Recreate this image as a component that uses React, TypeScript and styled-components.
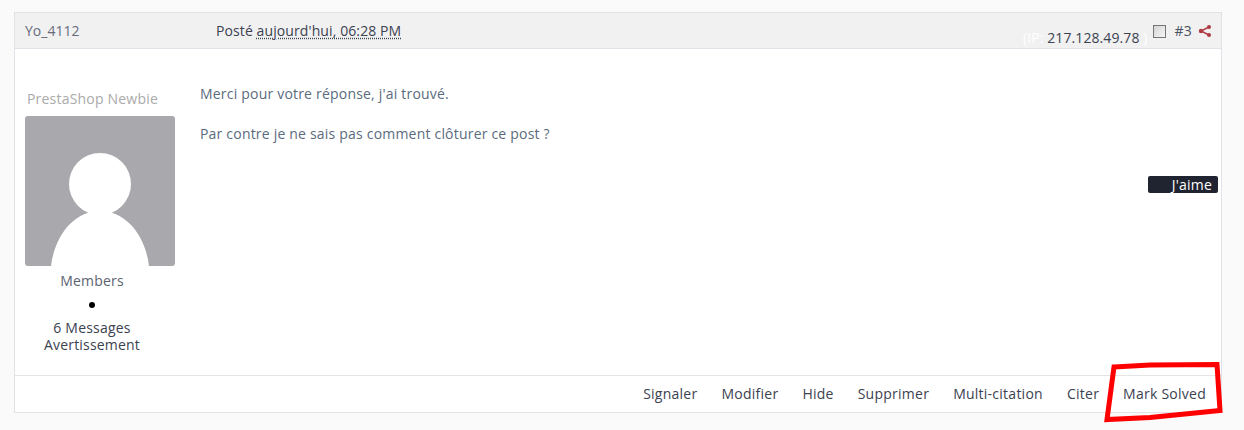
import styled, { createGlobalStyle } from 'styled-components'

const Global = createGlobalStyle`
  html, body {
    margin: 0;
    padding: 0;
    background: #fafafa;
    font-family: "Open Sans", "Liberation Sans", sans-serif;
    font-size: 14px;
    letter-spacing: 0.2px;
    color: #3b4250;
  }
`

const Page = styled.div`
  position: relative;
  width: 1244px;
  height: 430px;
  padding: 12px 22px 0 14px;
  box-sizing: border-box;
  overflow: hidden;
`

const Card = styled.article`
  height: 401px;
  box-sizing: border-box;
  background: #fff;
  border: 1px solid #dfe3e8;
  display: flex;
  flex-direction: column;
`

const Header = styled.header`
  height: 36px;
  flex: none;
  box-sizing: border-box;
  background: #f1f1f2;
  border-bottom: 1px solid #dfe3e8;
  display: flex;
  align-items: center;
  padding: 0 9px 0 10px;
`

const Author = styled.span`
  width: 191px;
  letter-spacing: 0;
  color: #666d7a;
`

const Posted = styled.span`
  flex: 1;
  letter-spacing: 0.1px;
  color: #3b4250;
`

const PostDate = styled.abbr`
  text-decoration: underline dotted;
  text-underline-offset: 2px;
`

const Ip = styled.span`
  color: #fff;
  letter-spacing: 0.1px;
  margin: 13px 5px 0 0;
  line-height: 19px;
`

const IpValue = styled.span`
  color: #3b4250;
`

const Check = styled.span`
  width: 11px;
  height: 11px;
  border: 1px solid #767676;
  background: linear-gradient(135deg, #d4d4d4, #f6f6f6);
  margin: 1px 9px 0 0;
`

const PostNumber = styled.span`
  color: #4a5260;
  margin: -1px 6px 0 0;
`

const ShareIcon = styled.svg`
  width: 14px;
  height: 14px;
  color: #b03a42;
`

const Body = styled.div`
  flex: 1;
  position: relative;
  display: flex;
  min-height: 0;
`

const Side = styled.aside`
  width: 155px;
  margin-left: 10px;
  flex: none;
  padding-top: 40px;
  display: flex;
  flex-direction: column;
  align-items: center;
  box-sizing: border-box;
`

const Rank = styled.div`
  align-self: flex-start;
  margin-left: 2px;
  line-height: 20px;
  color: #aaaaaa;
`

const Avatar = styled.svg`
  display: block;
  width: 150px;
  height: 150px;
  margin-top: 7px;
  align-self: flex-start;
  border-radius: 3px;
`

const Group = styled.div`
  margin-top: 5px;
  line-height: 20px;
  color: #5a6270;
  width: 150px;
  margin-right: 21px;
  text-align: center;
`

const Bullet = styled.span`
  display: block;
  width: 6px;
  height: 6px;
  border-radius: 50%;
  background: #000;
  margin: 11px 0 0 -21px;
`

const Stats = styled.div`
  margin: 11px 21px 0 0;
  line-height: 17px;
  text-align: center;
  color: #3b4250;
`

const Content = styled.div`
  flex: 1;
  padding: 35px 0 0 20px;
  color: #5a6b7d;
`

const Paragraph = styled.p`
  margin: 0 0 20px;
  line-height: 20px;
`

const LikeBadge = styled.span`
  position: absolute;
  right: 3px;
  top: 127px;
  width: 70px;
  height: 17px;
  box-sizing: border-box;
  padding-right: 6px;
  background: #1f2430;
  border-radius: 2px;
  color: #fff;
  line-height: 17px;
  text-align: right;
`

const Footer = styled.footer`
  height: 37px;
  flex: none;
  box-sizing: border-box;
  border-top: 1px solid #e4e4e4;
  display: flex;
  justify-content: flex-end;
  align-items: center;
  gap: 24px;
  padding: 0 15px 2px 0;
`

const Action = styled.a`
  color: #3b4250;
  letter-spacing: 0.25px;
  cursor: pointer;
`

const Scribble = styled.svg`
  position: absolute;
  left: 1100px;
  top: 358px;
  width: 130px;
  height: 68px;
  pointer-events: none;
`

const actions = ['Signaler', 'Modifier', 'Hide', 'Supprimer', 'Multi-citation', 'Citer', 'Mark Solved']

export default function App() {
  return (
    <Page>
      <Global />
      <Card>
        <Header>
          <Author>Yo_4112</Author>
          <Posted>
            Posté <PostDate>aujourd'hui, 06:28 PM</PostDate>
          </Posted>
          <Ip>
            (IP: <IpValue>217.128.49.78</IpValue> )
          </Ip>
          <Check />
          <PostNumber>#3</PostNumber>
          <ShareIcon viewBox="0 0 14 14">
            <path d="M11 3 3 7l8 4" fill="none" stroke="currentColor" strokeWidth="1.4" />
            <circle cx="11" cy="3" r="2" fill="currentColor" />
            <circle cx="3" cy="7" r="2.2" fill="currentColor" />
            <circle cx="11" cy="11" r="2" fill="currentColor" />
          </ShareIcon>
        </Header>
        <Body>
          <Side>
            <Rank>PrestaShop Newbie</Rank>
            <Avatar viewBox="0 0 150 150">
              <rect width="150" height="150" fill="#a9a8ac" />
              <circle cx="75" cy="68" r="31" fill="#fff" />
              <path d="M26 150C30 118 50 95 75 95s45 23 49 55z" fill="#fff" />
            </Avatar>
            <Group>Members</Group>
            <Bullet />
            <Stats>
              6 Messages
              <br />
              Avertissement
            </Stats>
          </Side>
          <Content>
            <Paragraph>Merci pour votre réponse, j'ai trouvé.</Paragraph>
            <Paragraph>Par contre je ne sais pas comment clôturer ce post ?</Paragraph>
          </Content>
          <LikeBadge>J'aime</LikeBadge>
        </Body>
        <Footer>
          {actions.map(label => (
            <Action key={label}>{label}</Action>
          ))}
        </Footer>
      </Card>
      <Scribble viewBox="0 0 130 68">
        <path
          d="M14 9 50 7l67-0.500 3 46-40 4-30 3-43 2z"
          fill="none"
          stroke="#f00"
          strokeWidth="5"
          strokeLinejoin="miter"
        />
      </Scribble>
    </Page>
  )
}
